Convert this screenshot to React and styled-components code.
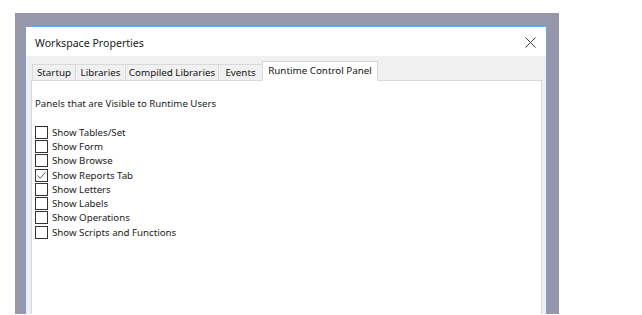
import React from 'react';
import styled, { createGlobalStyle } from 'styled-components';

const GlobalStyle = createGlobalStyle`
  html, body {
    margin: 0;
    padding: 0;
    background: #ffffff;
    overflow: hidden;
  }
  body {
    font-family: "Noto Sans", "Liberation Sans", sans-serif;
  }
`;

const tabs = [
  { label: 'Startup', width: 44 },
  { label: 'Libraries', width: 51 },
  { label: 'Compiled Libraries', width: 94 },
  { label: 'Events', width: 45 },
  { label: 'Runtime Control Panel', width: 116 },
];

const options = [
  { label: 'Show Tables/Set', checked: false },
  { label: 'Show Form', checked: false },
  { label: 'Show Browse', checked: false },
  { label: 'Show Reports Tab', checked: true },
  { label: 'Show Letters', checked: false },
  { label: 'Show Labels', checked: false },
  { label: 'Show Operations', checked: false },
  { label: 'Show Scripts and Functions', checked: false },
];

const App = () => {
  return (
    <>
      <GlobalStyle />
      <Backdrop>
        <Frame>
          <Window>
            <TitleBar>
              <Title>Workspace Properties</Title>
              <CloseButton>
                <svg width="11" height="11" viewBox="0 0 11 11">
                  <path d="M0.5 0.5 L10.5 10.5 M10.5 0.5 L0.5 10.5" stroke="#444" strokeWidth="1" fill="none" />
                </svg>
              </CloseButton>
            </TitleBar>
            <TabArea>
              <TabRow>
                {tabs.map((t, i) => (
                  <Tab key={t.label} $width={t.width} $active={i === tabs.length - 1}>
                    {t.label}
                  </Tab>
                ))}
              </TabRow>
              <Panel>
                <Heading>Panels that are Visible to Runtime Users</Heading>
                <CheckList>
                  {options.map((o) => (
                    <CheckRow key={o.label}>
                      <Box>
                        {o.checked && (
                          <svg width="11" height="11" viewBox="0 0 11 11">
                            <path d="M1.5 5.5 L4.2 8.3 L9.6 2.2" stroke="#555" strokeWidth="1" fill="none" />
                          </svg>
                        )}
                      </Box>
                      <CheckLabel>{o.label}</CheckLabel>
                    </CheckRow>
                  ))}
                </CheckList>
              </Panel>
            </TabArea>
          </Window>
        </Frame>
      </Backdrop>
    </>
  );
};

const Backdrop = styled.div`
  width: 642px;
  height: 315px;
  padding: 13px 0 0 15px;
  box-sizing: border-box;
  border-top: 1px solid #f4f4f4;
  margin-top: -1px;
`;

const Frame = styled.div`
  width: 544px;
  height: 302px;
  box-sizing: border-box;
  padding: 13px 12px 0 10px;
  background: #9896aa;
  display: flex;
`;

const Window = styled.div`
  flex: 1;
  display: flex;
  flex-direction: column;
  background: #ffffff;
  border: 1px solid #6ea6e4;
  border-bottom: none;
`;

const TitleBar = styled.div`
  height: 29px;
  display: flex;
  align-items: center;
  justify-content: space-between;
  padding: 2px 10px 0 9px;
  box-sizing: border-box;
`;

const Title = styled.span`
  font-size: 10.6px;
  color: #1a1a1a;
`;

const CloseButton = styled.span`
  display: flex;
  align-items: center;
`;

const TabArea = styled.div`
  flex: 1;
  display: flex;
  flex-direction: column;
  background: #f0f0f0;
  padding: 5px 4px 0 5px;
`;

const TabRow = styled.div`
  display: flex;
  align-items: flex-end;
  padding-left: 2px;
  position: relative;
  z-index: 1;
  margin-bottom: -1px;
`;

const Tab = styled.div`
  width: ${(p) => p.$width}px;
  font-size: 9.8px;
  color: #141414;
  box-sizing: border-box;
  display: flex;
  align-items: center;
  justify-content: center;
  white-space: nowrap;
  height: ${(p) => (p.$active ? '20px' : '17px')};
  background: ${(p) => (p.$active ? '#ffffff' : '#f0f0f0')};
  border: 1px solid #d9d9d9;
  border-bottom: ${(p) => (p.$active ? '1px solid #ffffff' : '1px solid #d9d9d9')};
  margin-left: -1px;
  padding-bottom: ${(p) => (p.$active ? '2px' : '0')};
`;

const Panel = styled.div`
  flex: 1;
  background: #ffffff;
  border: 1px solid #d9d9d9;
  border-bottom: none;
  padding: 16px 0 0 3px;
`;

const Heading = styled.div`
  font-size: 9.7px;
  color: #1a1a1a;
  margin-bottom: 15px;
`;

const CheckList = styled.div`
  display: flex;
  flex-direction: column;
`;

const CheckRow = styled.div`
  display: flex;
  align-items: center;
  height: 14.3px;
`;

const Box = styled.span`
  width: 11px;
  height: 11px;
  border: 1px solid #333333;
  background: #ffffff;
  display: flex;
  align-items: center;
  justify-content: center;
  margin-right: 4px;
`;

const CheckLabel = styled.span`
  font-size: 9.7px;
  color: #1a1a1a;
`;

export default App;
